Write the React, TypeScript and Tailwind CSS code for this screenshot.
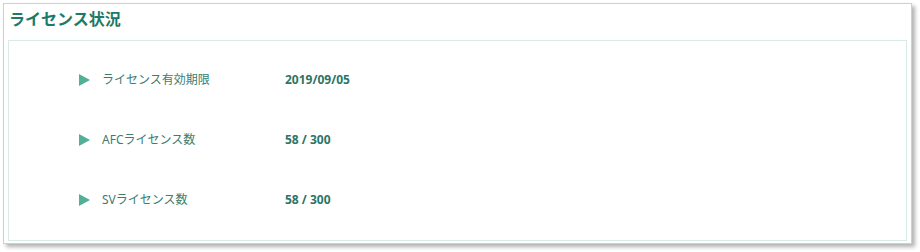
import React from "react";

const rows = [
  { label: "ライセンス有効期限", value: "2019/09/05" },
  { label: "AFCライセンス数", value: "58 / 300" },
  { label: "SVライセンス数", value: "58 / 300" },
];

export default function App() {
  return (
    <div className="w-[920px] h-[252px] bg-white pt-[3px] pl-[3px]" style={{ fontFamily: '"Segoe UI", "Noto Sans", "Noto Sans CJK JP", sans-serif' }}>
      <div className="w-[909px] h-[241px] border border-[#cfcfcf] bg-white shadow-[3px_3px_4px_rgba(0,0,0,0.3)] px-[4px] pb-[2px] flex flex-col">
        <div className="h-[36px] pl-[1px] pt-[4px] text-[16px] font-bold leading-[22px] text-[#1d7a68]">ライセンス状況</div>
        <div className="flex-1 border border-[#d8ebe5] pt-[9px]">
          {rows.map((r) => (
            <div key={r.label} className="h-[60px] flex items-center">
              <svg width="12" height="12" viewBox="0 0 12 12" className="ml-[70px]">
                <polygon points="0,0 11,6 0,12" fill="#52b096" />
              </svg>
              <div className="ml-[11px] w-[183px] text-[12px] text-[#3b7d70]">{r.label}</div>
              <div className="text-[12px] font-bold text-[#2a7566]">{r.value}</div>
            </div>
          ))}
        </div>
      </div>
    </div>
  );
}
